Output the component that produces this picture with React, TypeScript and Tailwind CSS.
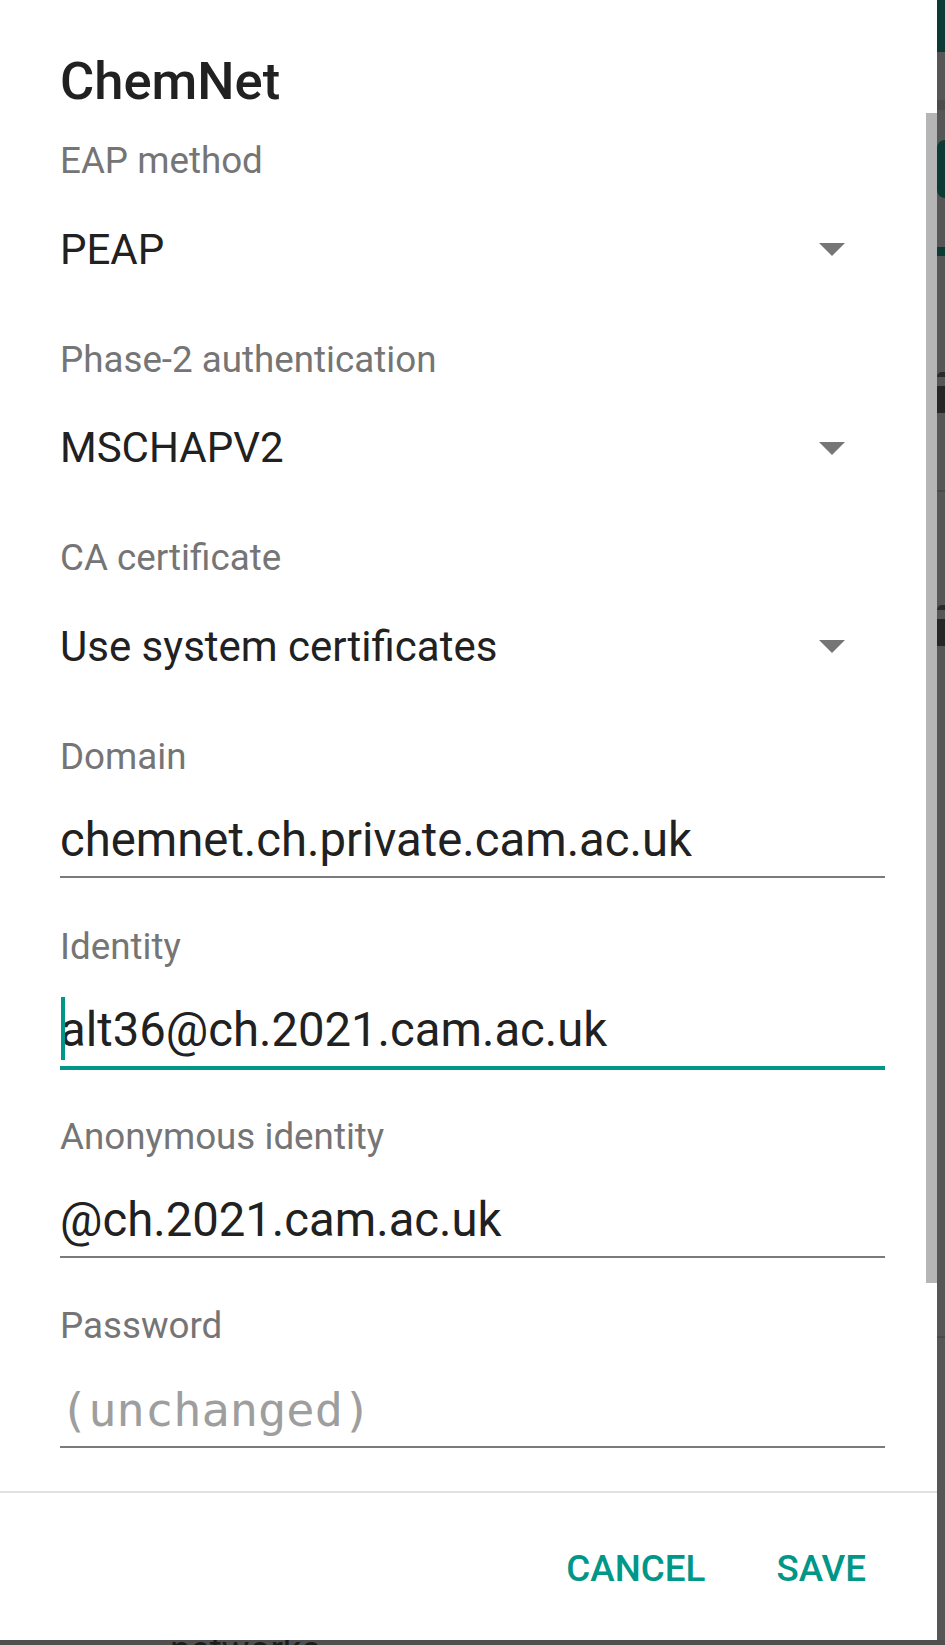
import React from "react";

const roboto = { fontFamily: "Roboto, 'Liberation Sans', sans-serif" };

function Label({ text, className = "" }: { text: string; className?: string }) {
  return (
    <div className={`h-[44px] text-[36.75px] leading-[44px] text-[#757575] whitespace-nowrap ${className}`}>
      {text}
    </div>
  );
}

function Spinner({ label, value, first }: { label: string; value: string; first?: boolean }) {
  return (
    <div>
      <Label text={label} className={first ? "mt-[26.4px]" : "mt-[59.8px]"} />
      <div className="mt-[38.6px] h-[56px] flex items-center justify-between pr-[40px]">
        <span className="text-[42px] leading-[56px] text-[#212121] whitespace-nowrap">{value}</span>
        <svg width="26" height="13" viewBox="0 0 26 13">
          <path d="M0 0H26L13 13Z" fill="#767676" />
        </svg>
      </div>
    </div>
  );
}

function Field({
  label,
  value,
  focused,
  hint,
  top = "mt-[44.4px]",
}: {
  label: string;
  value: string;
  focused?: boolean;
  hint?: boolean;
  top?: string;
}) {
  return (
    <div>
      <Label text={label} className={top} />
      <div className="mt-[33.4px] h-[56px] relative">
        {hint ? (
          <span
            className="text-[47px] leading-[56px] text-[#9e9e9e] whitespace-nowrap"
            style={{ fontFamily: "'DejaVu Sans Mono', 'Liberation Mono', monospace" }}
          >
            (unchanged)
          </span>
        ) : (
          <span className="text-[47.25px] leading-[56px] text-[#212121] whitespace-nowrap">{value}</span>
        )}
        {focused && <div className="absolute left-[1px] top-[-5px] w-[4px] h-[63px] bg-[#009688]" />}
      </div>
      <div className="mt-[8.2px] h-[4px]">
        <div className={focused ? "h-[4px] bg-[#009688]" : "h-[2px] bg-[#7b7b7b]"} />
      </div>
    </div>
  );
}

export default function App() {
  return (
    <div className="w-[945px] h-[1645px] bg-[#4f4f4f] flex flex-col overflow-hidden" style={roboto}>
      <div className="flex h-[1640px] shrink-0">
        {/* dialog */}
        <div className="w-[937px] h-full bg-white flex flex-col">
          <div className="relative h-[1491px] pl-[60px] pr-[52px]">
            <div className="pt-[49px] h-[113px] text-[52.5px] leading-[64px] font-medium text-[#212121]">ChemNet</div>
            <Spinner first label="EAP method" value="PEAP" />
            <Spinner label="Phase-2 authentication" value="MSCHAPV2" />
            <Spinner label="CA certificate" value="Use system certificates" />
            <Field top="mt-[59.8px]" label="Domain" value="chemnet.ch.private.cam.ac.uk" />
            <Field label="Identity" value="alt36@ch.2021.cam.ac.uk" focused />
            <Field label="Anonymous identity" value="@ch.2021.cam.ac.uk" />
            <Field label="Password" value="" hint />
            {/* scrollbar */}
            <div className="absolute right-0 top-[113px] w-[11px] h-[1170px] bg-[#b5b5b5]" />
          </div>
          <div className="h-[2px] bg-[#e0e0e0]" />
          <div className="flex-1 flex justify-end items-start pt-[54.4px] pr-[71px] gap-[71px]">
            <span className="text-[36.75px] leading-[44px] font-medium text-[#009688]">CANCEL</span>
            <span className="text-[36.75px] leading-[44px] font-medium text-[#009688]">SAVE</span>
          </div>
        </div>
        {/* dimmed screen behind, right edge */}
        <div className="flex-1 flex flex-col bg-[#565656]">
          <div className="h-[52px] bg-[#0c3a34]" />
          <div className="h-[48px]" />
          <div className="h-[10px] bg-[#4b4b4b]" />
          <div className="h-[30px]" />
          <div className="h-[58px] bg-[#0c3a34] rounded-l-full" />
          <div className="h-[49px]" />
          <div className="h-[9px] bg-[#0c3a34]" />
          <div className="h-[116px]" />
          <div className="h-[5px] bg-[#2a2a2a] rounded-tl-full" />
          <div className="h-[9px]" />
          <div className="h-[27px] bg-[#262626]" />
          <div className="h-[77px]" />
          <div className="h-[2px] bg-[#4a4a4a]" />
          <div className="h-[113px]" />
          <div className="h-[5px] bg-[#2a2a2a] rounded-tl-full" />
          <div className="h-[9px]" />
          <div className="h-[27px] bg-[#262626]" />
          <div className="h-[690px]" />
          <div className="h-[2px] bg-[#4a4a4a]" />
        </div>
      </div>
      {/* dimmed screen behind, bottom edge */}
      <div className="h-[5px] overflow-hidden pl-[170px]">
        <div className="text-[36.75px] leading-[44px] mt-[-12px] text-[#1c1c1c] whitespace-nowrap">networks</div>
      </div>
    </div>
  );
}
